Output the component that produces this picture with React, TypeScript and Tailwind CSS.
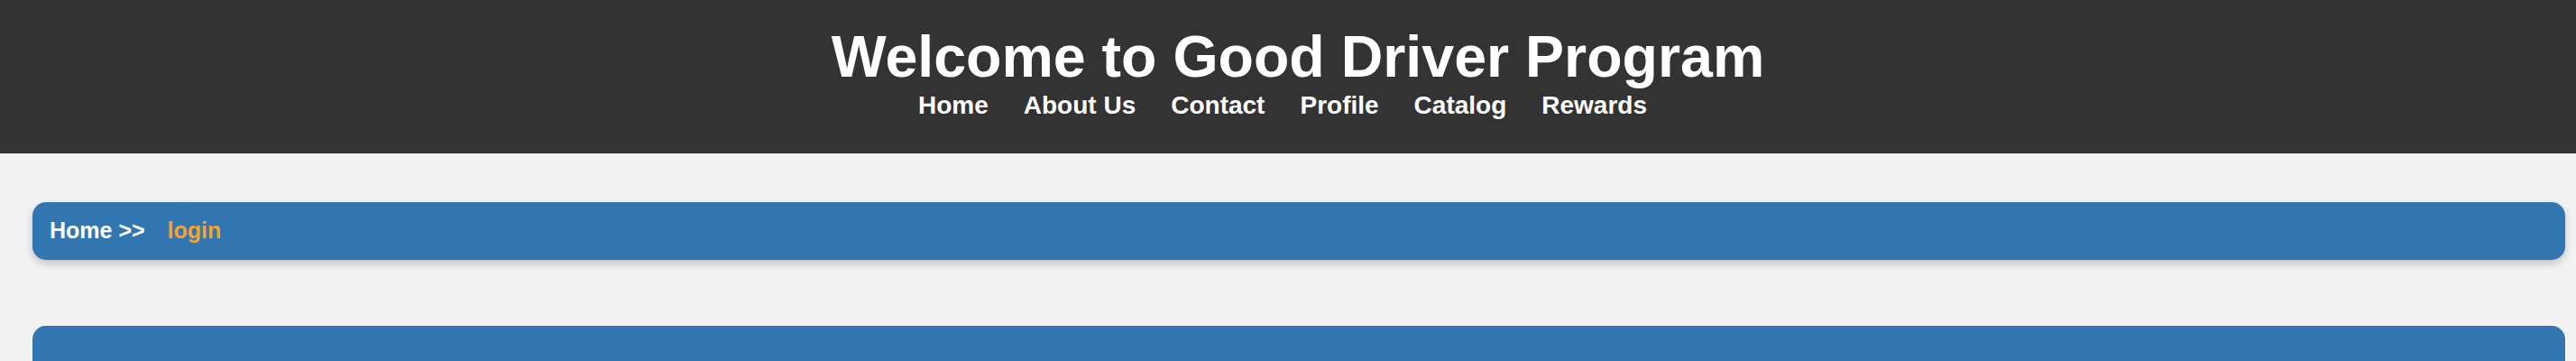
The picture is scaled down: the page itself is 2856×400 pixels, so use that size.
import React from "react";

export default function App() {
  const links = ["Home", "About Us", "Contact", "Profile", "Catalog", "Rewards"];
  return (
    <div className="min-h-[400px] bg-[#f2f2f2] font-['Liberation_Sans',Arial,sans-serif]">
      <header className="h-[170px] bg-[#333333] text-white flex flex-col items-center pt-[31px]">
        <h1 className="text-[64.5px] leading-[64px] font-bold pl-[22px]">Welcome to Good Driver Program</h1>
        <nav className="mt-[8px] flex gap-[39px] text-[28px] leading-[28px] font-bold pr-[12px]">
          {links.map((l) => (
            <a key={l} className="text-white">{l}</a>
          ))}
        </nav>
      </header>
      <div className="ml-[36px] mr-[12px] mt-[54px] h-[64px] rounded-[15px] bg-[#3276b1] shadow-[0_4px_8px_rgba(0,0,0,0.2)] flex items-center pl-[19px] text-[25px] font-bold">
        <span className="text-white">Home &gt;&gt;</span>
        <span className="ml-[25px] text-[#f0a431]">login</span>
      </div>
      <div className="ml-[36px] mr-[12px] mt-[73px] h-[39px] rounded-t-[15px] bg-[#3276b1]"></div>
    </div>
  );
}
